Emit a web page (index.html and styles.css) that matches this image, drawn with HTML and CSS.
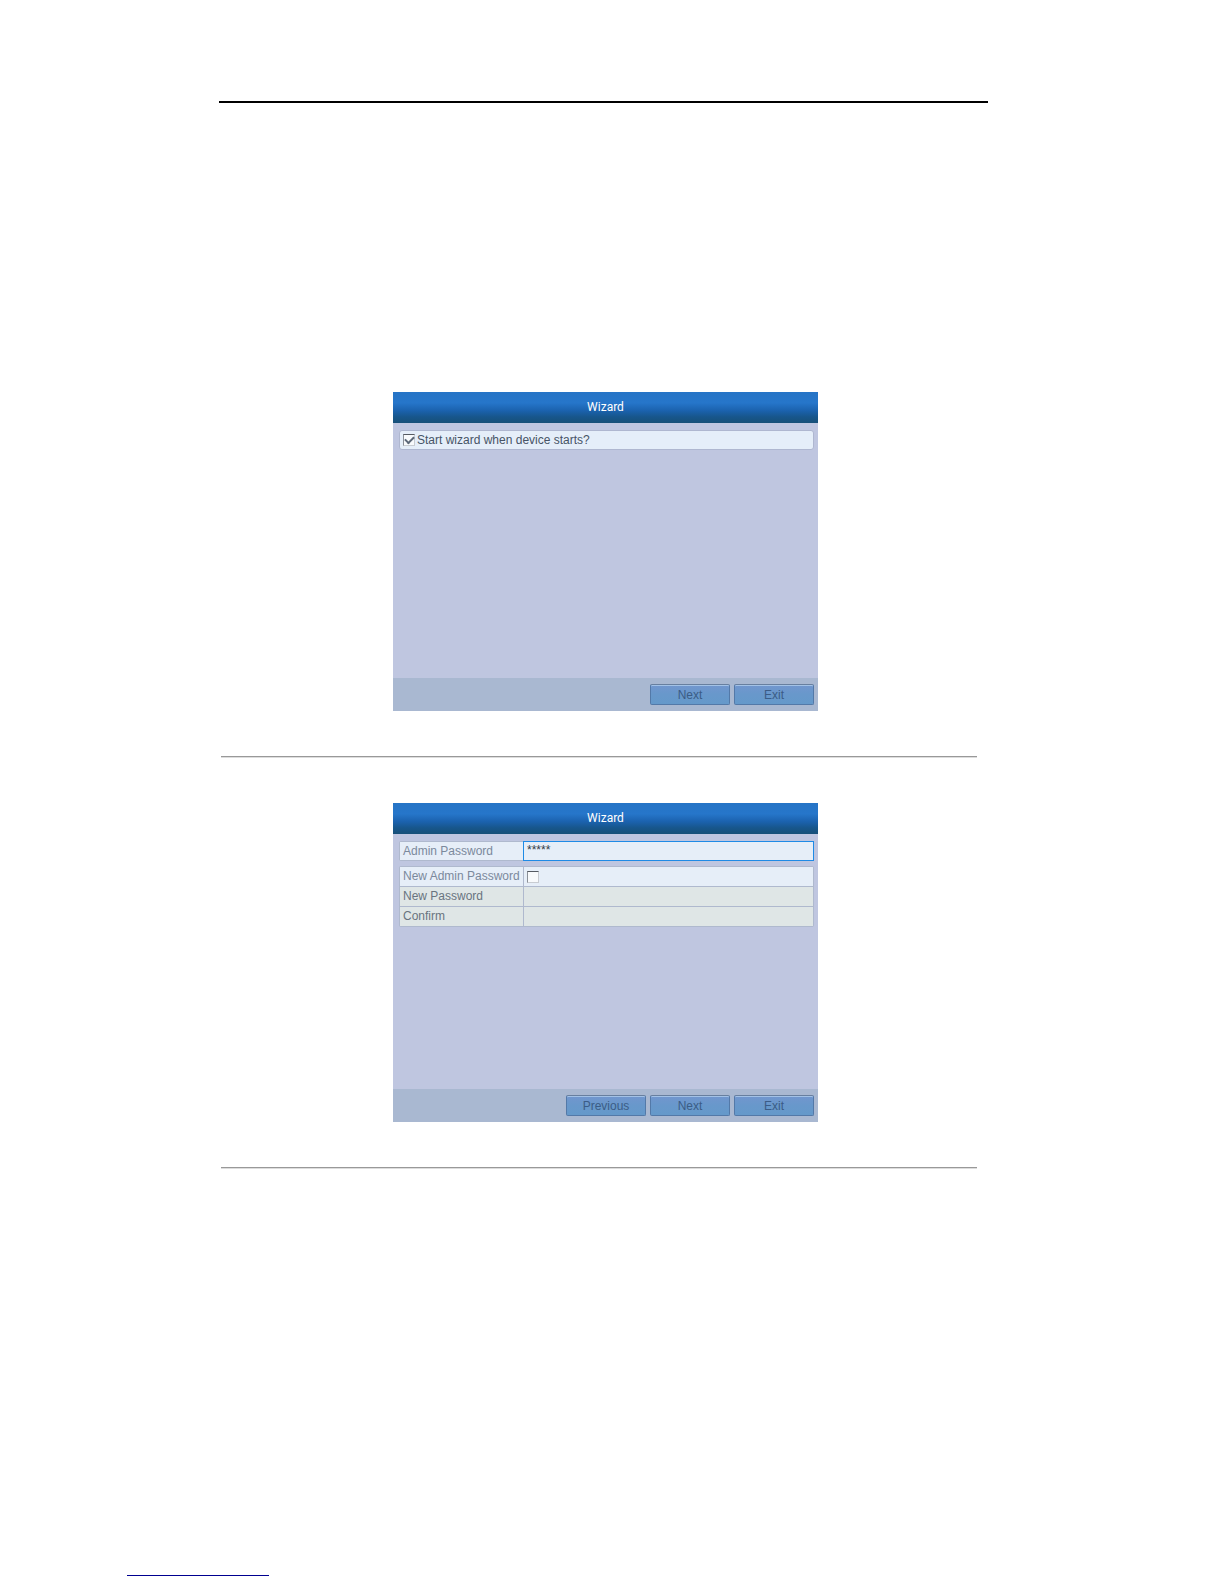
FILE: index.html
```html
<!DOCTYPE html>
<html lang="en">
<head>
<meta charset="utf-8">
<title>Wizard</title>
<link rel="stylesheet" href="styles.css">
</head>
<body>
<main class="page">
  <hr class="page-rule">
  <section class="step">
    <form class="wizard">
      <h2 class="wizard-title">Wizard</h2>
      <div class="wizard-body">
        <label class="option">
          <input class="tick" type="checkbox" checked>
          <span>Start wizard when device starts?</span>
        </label>
      </div>
      <div class="wizard-actions">
        <button class="btn" type="button">Next</button>
        <button class="btn" type="button">Exit</button>
      </div>
    </form>
    <hr class="step-rule">
  </section>
  <section class="step">
    <form class="wizard">
      <h2 class="wizard-title">Wizard</h2>
      <div class="wizard-body">
        <div class="fields">
          <div class="field">
            <label class="field-label" for="admin">Admin Password</label>
            <input class="field-input active" id="admin" type="text" value="*****">
          </div>
        </div>
        <div class="fields">
          <div class="field">
            <label class="field-label" for="change">New Admin Password</label>
            <div class="field-cell"><input class="tick" id="change" type="checkbox"></div>
          </div>
          <div class="field off">
            <label class="field-label" for="new">New Password</label>
            <input class="field-input" id="new" type="password" disabled>
          </div>
          <div class="field off">
            <label class="field-label" for="confirm">Confirm</label>
            <input class="field-input" id="confirm" type="password" disabled>
          </div>
        </div>
      </div>
      <div class="wizard-actions">
        <button class="btn" type="button">Previous</button>
        <button class="btn" type="button">Next</button>
        <button class="btn" type="button">Exit</button>
      </div>
    </form>
    <hr class="step-rule">
  </section>
</main>
<footer class="page-footer">
  <hr class="footer-rule">
</footer>
</body>
</html>
```
FILE: styles.css
```css
* {
  box-sizing: border-box;
}

body {
  margin: 0;
  min-height: 100vh;
  display: flex;
  flex-direction: column;
  background: #fff;
  font-family: "Liberation Sans", Arial, sans-serif;
  font-size: 12px;
  line-height: 18px;
}

hr {
  margin: 0;
  border: 0;
}

.page {
  flex: 1;
  padding: 101px 236px 0 219px;
}

.page-rule {
  height: 2px;
  margin-bottom: 289px;
  background: #000;
}

.step {
  margin: 0 11px 46px 2px;
}

.step-rule {
  height: 1px;
  margin-top: 45px;
  background: #999;
  box-shadow: 0 1px 0 #ddd;
}

.wizard {
  display: flex;
  flex-direction: column;
  width: 425px;
  max-width: 100%;
  min-height: 319px;
  margin-left: 172px;
  background: #bfc6e0;
}

.wizard-title {
  margin: 0;
  background: linear-gradient(#2674c6, #2676ca 35%, #1b62ae 60%, #17568c 80%, #175078);
  color: #fff;
  font-family: Roboto, sans-serif;
  font-size: 12px;
  font-weight: 400;
  line-height: 31px;
  text-align: center;
}

.wizard-body {
  flex: 1;
  display: flex;
  flex-direction: column;
  gap: 5px;
  padding: 7px 4px 7px 6px;
}

.option {
  display: flex;
  align-items: center;
  gap: 2px;
  padding-left: 3px;
  border: 1px solid #afb7d0;
  border-radius: 3px;
  background: #e5eef9;
  color: #475466;
}

.tick {
  appearance: none;
  display: grid;
  place-items: center;
  width: 12px;
  height: 12px;
  margin: 0;
  border: 1px solid #c8ccd2;
  border-top-color: #555a62;
  border-left-color: #8b9098;
  background: #f8fafc;
}

.tick:checked::before {
  content: "";
  width: 7px;
  height: 4px;
  margin-bottom: 2px;
  border: solid #5c6878;
  border-width: 0 0 2px 2px;
  transform: rotate(-45deg);
}

.fields {
  display: flex;
  flex-direction: column;
  gap: 1px;
  padding: 1px;
  border-radius: 2px;
  background: #afb9ce;
}

.field {
  display: grid;
  grid-template-columns: 123px 1fr;
  gap: 1px;
  height: 19px;
  color: #7b899c;
}

.fields:first-child .field {
  height: 18px;
}

.field-label,
.field-cell,
.field-input {
  background: #e6eef8;
}

.field-label {
  padding-left: 3px;
  line-height: 18px;
  white-space: nowrap;
}

.field-cell {
  display: flex;
  align-items: center;
  padding-left: 3px;
}

.field-input {
  min-width: 0;
  margin: 0;
  padding: 0 3px;
  border: 0;
  border-radius: 0;
  color: #333c48;
  font: inherit;
}

.field-input.active {
  height: 20px;
  margin: -1px;
  padding-bottom: 3px;
  outline: 0;
  border: 1px solid #1e8ae6;
  line-height: 15px;
}

.off {
  color: #69747f;
}

.off .field-label,
.off .field-input {
  background: #dfe6e6;
}

.wizard-actions {
  display: flex;
  justify-content: flex-end;
  gap: 4px;
  padding: 6px 4px;
  background: #a9b8d1;
}

.btn {
  width: 80px;
  height: 21px;
  padding: 0;
  border: 1px solid #5379a8;
  border-top-color: #687f9f;
  border-radius: 2px;
  background: linear-gradient(#7296ce, #6898cb 50%, #6599ca);
  box-shadow: inset 0 1px 0 #a3c2e6;
  color: #3b5c86;
  font: inherit;
}

.page-footer {
  padding: 0 127px 8px;
}

.footer-rule {
  width: 142px;
  height: 1px;
  background: #000090;
}
```
